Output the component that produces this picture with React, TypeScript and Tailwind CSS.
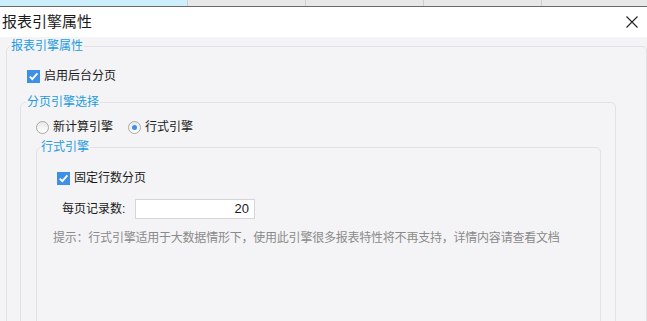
import React from "react";

const FONT = { fontFamily: '"Liberation Sans", "Noto Sans CJK SC", sans-serif' };

function Checkbox() {
  return (
    <span className="w-[13px] h-[13px] bg-[#3d8fe8] flex items-center justify-center shrink-0">
      <svg width="11" height="11" viewBox="0 0 11 11">
        <path d="M1.8 5.6 L4.3 8.2 L9.4 2.3" stroke="#fff" strokeWidth="1.8" fill="none" />
      </svg>
    </span>
  );
}

function Radio({ checked }: { checked?: boolean }) {
  return (
    <span className="w-[13px] h-[13px] rounded-full border border-[#a8a8a8] bg-gradient-to-b from-[#e8e8e8] to-[#ffffff] flex items-center justify-center shrink-0">
      {checked && <span className="w-[5px] h-[5px] rounded-full bg-[#3d8fe8]" />}
    </span>
  );
}

export default function App() {
  return (
    <div className="w-[647px] h-[321px] overflow-hidden flex flex-col bg-[#f4f4f6] text-[12px] text-[#1a1a1a]" style={FONT}>
      <div className="h-[6px] flex shrink-0">
        <div className="w-[187px] bg-[#cdeffb]" />
        <div className="w-[118px] bg-[#e8e8e8] border-l border-[#cfcfcf]" />
        <div className="w-[118px] bg-[#e8e8e8] border-l border-[#cfcfcf]" />
        <div className="w-[118px] bg-[#e8e8e8] border-l border-[#cfcfcf]" />
        <div className="flex-1 bg-[#e8e8e8] border-l border-[#cfcfcf]" />
      </div>
      <div className="h-px bg-[#6a6a6a] shrink-0" />
      <div className="h-[30px] bg-white flex items-center justify-between pl-[2px] pr-[9px] shrink-0">
        <span className="text-[15px] leading-[20px] text-[#1a1a1a]">报表引擎属性</span>
        <svg width="12" height="12" viewBox="0 0 12 12">
          <path d="M0.5 0.5 L11.5 11.5 M11.5 0.5 L0.5 11.5" stroke="#222" strokeWidth="1.1" />
        </svg>
      </div>
      <div className="flex-1 pl-[6px]">
        <fieldset className="border border-[#e2e2e6] rounded-[5px] h-[400px] w-[641px]">
          <legend className="ml-[3px] px-[1px] leading-[18px] text-[12px] text-[#1d9be0]">报表引擎属性</legend>
          <div className="mt-[12px] ml-[20px] h-[18px] flex items-center gap-[4px]">
            <Checkbox />
            <span>启用后台分页</span>
          </div>
          <fieldset className="mt-[8px] ml-[13px] mr-[30px] border border-[#e2e2e6] rounded-[5px] h-[400px]">
            <legend className="ml-[5px] px-[1px] leading-[18px] text-[12px] text-[#1d9be0]">分页引擎选择</legend>
            <div className="mt-[7px] ml-[15px] h-[18px] flex items-center">
              <Radio />
              <span className="ml-[4px]">新计算引擎</span>
              <span className="ml-[15px]"><Radio checked /></span>
              <span className="ml-[4px]">行式引擎</span>
            </div>
            <fieldset className="mt-[2px] ml-[15px] mr-[14px] border border-[#e2e2e6] rounded-[5px] h-[400px]">
              <legend className="ml-[3px] px-[1px] leading-[18px] text-[12px] text-[#1d9be0]">行式引擎</legend>
              <div className="mt-[13px] ml-[20px] h-[18px] flex items-center gap-[4px]">
                <Checkbox />
                <span>固定行数分页</span>
              </div>
              <div className="mt-[12px] ml-[25px] h-[20px] flex items-center">
                <span className="w-[73px]">每页记录数:</span>
                <div className="w-[120px] h-[20px] bg-white border border-[#d6d6da] flex items-center justify-end pr-[5px] text-[13px]">20</div>
              </div>
              <div className="mt-[11px] ml-[16px] leading-[16px] text-[12px] tracking-[-0.22px] text-[#8a8a8a] whitespace-nowrap">
                提示：行式引擎适用于大数据情形下，使用此引擎很多报表特性将不再支持，详情内容请查看文档
              </div>
            </fieldset>
          </fieldset>
        </fieldset>
      </div>
    </div>
  );
}
